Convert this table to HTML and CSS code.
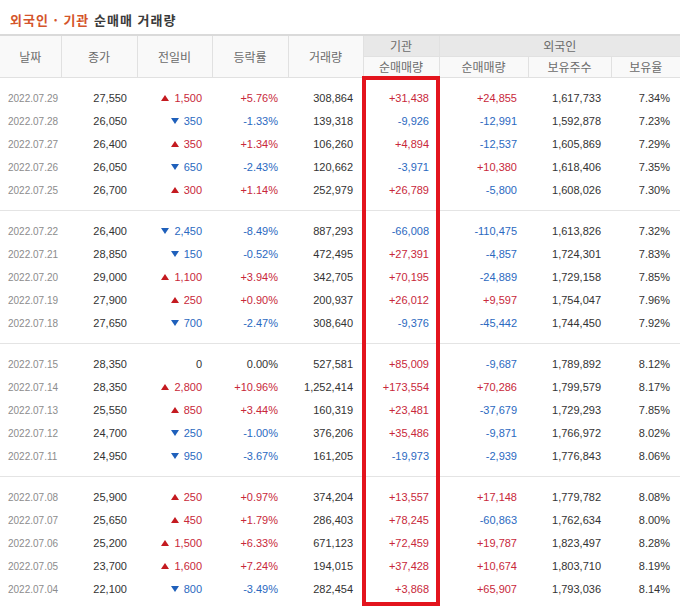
FILE: index.html
```html
<!DOCTYPE html>
<html lang="ko">
<head>
<meta charset="utf-8">
<title>외국인 · 기관 순매매 거래량</title>
<link rel="stylesheet" href="styles.css">
</head>
<body>
<div class="wrap">
  <h2 class="title"><span class="hl">외국인 · 기관</span> 순매매 거래량</h2>
  <table class="trade">
    <colgroup>
      <col class="c-date"><col class="c-close"><col class="c-diff"><col class="c-rate"><col class="c-vol">
      <col class="c-inst"><col class="c-fnet"><col class="c-fhold"><col class="c-fratio">
    </colgroup>
    <thead>
      <tr>
        <th rowspan="2">날짜</th>
        <th rowspan="2">종가</th>
        <th rowspan="2">전일비</th>
        <th rowspan="2">등락률</th>
        <th rowspan="2">거래량</th>
        <th class="grp">기관</th>
        <th class="grp" colspan="3">외국인</th>
      </tr>
      <tr>
        <th class="sub">순매매량</th>
        <th class="sub">순매매량</th>
        <th class="sub">보유주수</th>
        <th class="sub">보유율</th>
      </tr>
    </thead>
    <tbody>
      <tr><td class="date">2022.07.29</td><td>27,550</td><td class="red"><i class="up"></i>1,500</td><td class="red">+5.76%</td><td>308,864</td><td class="red">+31,438</td><td class="red">+24,855</td><td>1,617,733</td><td>7.34%</td></tr>
      <tr><td class="date">2022.07.28</td><td>26,050</td><td class="blue"><i class="dn"></i>350</td><td class="blue">-1.33%</td><td>139,318</td><td class="blue">-9,926</td><td class="blue">-12,991</td><td>1,592,878</td><td>7.23%</td></tr>
      <tr><td class="date">2022.07.27</td><td>26,400</td><td class="red"><i class="up"></i>350</td><td class="red">+1.34%</td><td>106,260</td><td class="red">+4,894</td><td class="blue">-12,537</td><td>1,605,869</td><td>7.29%</td></tr>
      <tr><td class="date">2022.07.26</td><td>26,050</td><td class="blue"><i class="dn"></i>650</td><td class="blue">-2.43%</td><td>120,662</td><td class="blue">-3,971</td><td class="red">+10,380</td><td>1,618,406</td><td>7.35%</td></tr>
      <tr><td class="date">2022.07.25</td><td>26,700</td><td class="red"><i class="up"></i>300</td><td class="red">+1.14%</td><td>252,979</td><td class="red">+26,789</td><td class="blue">-5,800</td><td>1,608,026</td><td>7.30%</td></tr>
    </tbody>
    <tbody>
      <tr><td class="date">2022.07.22</td><td>26,400</td><td class="blue"><i class="dn"></i>2,450</td><td class="blue">-8.49%</td><td>887,293</td><td class="blue">-66,008</td><td class="blue">-110,475</td><td>1,613,826</td><td>7.32%</td></tr>
      <tr><td class="date">2022.07.21</td><td>28,850</td><td class="blue"><i class="dn"></i>150</td><td class="blue">-0.52%</td><td>472,495</td><td class="red">+27,391</td><td class="blue">-4,857</td><td>1,724,301</td><td>7.83%</td></tr>
      <tr><td class="date">2022.07.20</td><td>29,000</td><td class="red"><i class="up"></i>1,100</td><td class="red">+3.94%</td><td>342,705</td><td class="red">+70,195</td><td class="blue">-24,889</td><td>1,729,158</td><td>7.85%</td></tr>
      <tr><td class="date">2022.07.19</td><td>27,900</td><td class="red"><i class="up"></i>250</td><td class="red">+0.90%</td><td>200,937</td><td class="red">+26,012</td><td class="red">+9,597</td><td>1,754,047</td><td>7.96%</td></tr>
      <tr><td class="date">2022.07.18</td><td>27,650</td><td class="blue"><i class="dn"></i>700</td><td class="blue">-2.47%</td><td>308,640</td><td class="blue">-9,376</td><td class="blue">-45,442</td><td>1,744,450</td><td>7.92%</td></tr>
    </tbody>
    <tbody>
      <tr><td class="date">2022.07.15</td><td>28,350</td><td>0</td><td>0.00%</td><td>527,581</td><td class="red">+85,009</td><td class="blue">-9,687</td><td>1,789,892</td><td>8.12%</td></tr>
      <tr><td class="date">2022.07.14</td><td>28,350</td><td class="red"><i class="up"></i>2,800</td><td class="red">+10.96%</td><td>1,252,414</td><td class="red">+173,554</td><td class="red">+70,286</td><td>1,799,579</td><td>8.17%</td></tr>
      <tr><td class="date">2022.07.13</td><td>25,550</td><td class="red"><i class="up"></i>850</td><td class="red">+3.44%</td><td>160,319</td><td class="red">+23,481</td><td class="blue">-37,679</td><td>1,729,293</td><td>7.85%</td></tr>
      <tr><td class="date">2022.07.12</td><td>24,700</td><td class="blue"><i class="dn"></i>250</td><td class="blue">-1.00%</td><td>376,206</td><td class="red">+35,486</td><td class="blue">-9,871</td><td>1,766,972</td><td>8.02%</td></tr>
      <tr><td class="date">2022.07.11</td><td>24,950</td><td class="blue"><i class="dn"></i>950</td><td class="blue">-3.67%</td><td>161,205</td><td class="blue">-19,973</td><td class="blue">-2,939</td><td>1,776,843</td><td>8.06%</td></tr>
    </tbody>
    <tbody class="last">
      <tr><td class="date">2022.07.08</td><td>25,900</td><td class="red"><i class="up"></i>250</td><td class="red">+0.97%</td><td>374,204</td><td class="red">+13,557</td><td class="red">+17,148</td><td>1,779,782</td><td>8.08%</td></tr>
      <tr><td class="date">2022.07.07</td><td>25,650</td><td class="red"><i class="up"></i>450</td><td class="red">+1.79%</td><td>286,403</td><td class="red">+78,245</td><td class="blue">-60,863</td><td>1,762,634</td><td>8.00%</td></tr>
      <tr><td class="date">2022.07.06</td><td>25,200</td><td class="red"><i class="up"></i>1,500</td><td class="red">+6.33%</td><td>671,123</td><td class="red">+72,459</td><td class="red">+19,787</td><td>1,823,497</td><td>8.28%</td></tr>
      <tr><td class="date">2022.07.05</td><td>23,700</td><td class="red"><i class="up"></i>1,600</td><td class="red">+7.24%</td><td>194,015</td><td class="red">+37,428</td><td class="red">+10,674</td><td>1,803,710</td><td>8.19%</td></tr>
      <tr><td class="date">2022.07.04</td><td>22,100</td><td class="blue"><i class="dn"></i>800</td><td class="blue">-3.49%</td><td>282,454</td><td class="red">+3,868</td><td class="red">+65,907</td><td>1,793,036</td><td>8.14%</td></tr>
    </tbody>
  </table>
  <div class="highlight" aria-hidden="true"></div>
</div>
</body>
</html>
```

FILE: styles.css
```css
html { overflow: hidden; }
body {
  margin: 0;
  background: #fff;
  font-family: "Liberation Sans", "Noto Sans CJK KR", sans-serif;
}
.wrap {
  position: relative;
  width: 680px;
}
.title {
  margin: 0;
  height: 34px;
  box-sizing: border-box;
  padding: 11px 10px 0;
  font-family: "Noto Sans CJK KR", sans-serif;
  font-size: 13px;
  line-height: 18px;
  font-weight: 700;
  color: #3a3a3a;
  letter-spacing: 1px;
}
.title .hl { color: #d4552b; }

.trade {
  width: 680px;
  table-layout: fixed;
  border-collapse: collapse;
  border-top: 2px solid #dadada;
}
.c-date { width: 61px; }
.c-close { width: 76px; }
.c-diff { width: 75px; }
.c-rate { width: 76px; }
.c-vol { width: 75px; }
.c-inst { width: 76px; }
.c-fnet { width: 89px; }
.c-fhold { width: 83px; }
.c-fratio { width: 69px; }

.trade th {
  padding: 0;
  height: 20px;
  line-height: 20px;
  font-family: "Noto Sans CJK KR", sans-serif;
  font-size: 12px;
  font-weight: 400;
  color: #6b6b6b;
  background: #f9f9f9;
  border: 1px solid #e1e1e1;
  border-top: none;
  text-align: center;
}
.trade th:first-child { border-left: none; }
.trade tr th:last-child { border-right: none; }
.trade th.grp { background: #e8e8e8; }
.trade th.sub { background: #f9f9f9; }

.trade td {
  padding: 0 10px 0 0;
  line-height: 23px;
  font-size: 11px;
  color: #333;
  text-align: right;
  white-space: nowrap;
}
.trade td:nth-child(7) { padding-right: 11px; }
.trade td.date {
  text-align: left;
  padding: 0 0 0 8px;
  font-size: 10px;
  color: #8c8c8c;
}
.trade tbody { border-bottom: 1px solid #e4e4e4; }
.trade tbody.last { border-bottom: none; }
.trade tbody tr:first-child td { padding-top: 9px; }
.trade tbody tr:last-child td { padding-bottom: 8px; }

.trade td.red { color: #c8283a; }
.trade td.blue { color: #2b69bf; }

.up, .dn {
  display: inline-block;
  width: 0;
  height: 0;
  margin-right: 5px;
  vertical-align: 1px;
  border-left: 4px solid transparent;
  border-right: 4px solid transparent;
}
.up { border-bottom: 6px solid #c41a20; }
.dn { border-top: 6px solid #1f60bb; }

.highlight {
  position: absolute;
  left: 362px;
  top: 76px;
  width: 78px;
  height: 530px;
  box-sizing: border-box;
  border: 4px solid #e3141d;
  pointer-events: none;
}
```
